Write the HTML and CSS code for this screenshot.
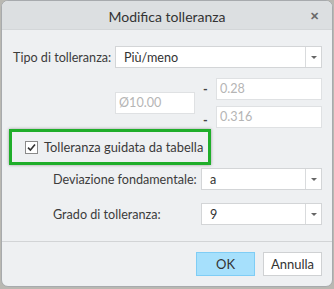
FILE: index.html
```html
<!DOCTYPE html>
<html>
<head>
    <title>Modifica tolleranza</title>
    <link rel="stylesheet" href="styles.css">
</head>
<body>
    <div class="dialog">
        <div class="titlebar">
            <span></span>
            <span class="title">Modifica tolleranza</span>
            <span class="close">&#x2715;</span>
        </div>

        <div class="content">
            <!-- Tipo -->
            <div class="row-type">
                <label>Tipo di tolleranza:</label>
                <div class="select">
                    <span class="value">Più/meno</span>
                    <span class="arrow"></span>
                </div>
            </div>

            <!-- Valori -->
            <div class="values">
                <div class="field nominal">Ø10.00</div>
                <div class="limits">
                    <div class="limit"><span class="minus">-</span><div class="field">0.28</div></div>
                    <div class="limit"><span class="minus">-</span><div class="field">0.316</div></div>
                </div>
            </div>

            <div class="table-box">
                <span class="check">
                    <svg width="9" height="9" viewBox="0 0 9 9"><path d="M1 4.6 L3.4 7 L8 1.6" fill="none" stroke="#333" stroke-width="1.6"/></svg>
                </span>
                <span>Tolleranza guidata da tabella</span>
            </div>

            <div class="row-sub">
                <label>Deviazione fondamentale:</label>
                <div class="select">
                    <span class="value">a</span>
                    <span class="arrow"></span>
                </div>
            </div>

            <div class="row-sub second">
                <label>Grado di tolleranza:</label>
                <div class="select">
                    <span class="value">9</span>
                    <span class="arrow"></span>
                </div>
            </div>
        </div>

        <div class="footer">
            <button class="ok">OK</button>
            <button>Annulla</button>
        </div>
    </div>
</body>
</html>
```

FILE: styles.css
```css
body {
    margin: 0;
    background: #b9b8b2;
    font-family: Lato, "Noto Sans", sans-serif;
    color: #3c3c3c;
}

.dialog {
    width: 330px;
    height: 285px;
    margin-left: 1px;
    border: 1px solid #a7aaad;
    border-radius: 7px;
    background: #eef0f2;
    overflow: hidden;
    display: flex;
    flex-direction: column;
}

.titlebar {
    height: 28px;
    background: #dcdfe1;
    border-bottom: 1px solid #d3d6d8;
    display: grid;
    grid-template-columns: 30px 1fr 30px;
    align-items: center;
    font-size: 14px;
}
.title { text-align: center; color: #333; padding-top: 2px; }
.close { text-align: center; font-size: 11px; font-weight: bold; color: #6a6a6a; padding-right: 6px; padding-top: 2px; }

.content { padding: 16px 10px 0 11px; font-size: 12.6px; flex: 1; }

.row-type { display: grid; grid-template-columns: 102px 1fr; align-items: center; }
label { white-space: nowrap; }

.select {
    height: 20px;
    border: 1px solid #d3d5d7;
    background: #fff;
    display: flex;
    align-items: center;
}
.select .value { flex: 1; padding-left: 8px; color: #333; }
.select .arrow {
    width: 15px;
    height: 100%;
    border-left: 1px solid #d9dbdd;
    display: flex;
    align-items: center;
    justify-content: center;
}
.select .arrow::after {
    content: "";
    border-left: 3px solid transparent;
    border-right: 3px solid transparent;
    border-top: 3px solid #666;
}

.values { display: flex; align-items: center; margin: 10px 0 0 102px; }
.field {
    height: 20px;
    border: 1px solid #dfe1e3;
    background: #fff;
    color: #b5b5b5;
    line-height: 20px;
    padding-left: 3px;
    box-sizing: content-box;
}
.nominal { width: 78px; }
.limits { display: flex; flex-direction: column; gap: 6px; margin-left: 8px; }
.limit { display: flex; align-items: center; }
.limit .field { width: 101px; }
.minus { width: 13px; font-weight: bold; color: #444; padding-top: 6px; }
.limit:first-child .minus { padding-top: 0; }

.table-box {
    margin: 1px 0 0 -4px;
    width: 183px;
    height: 30px;
    border: 3px solid #1fae2a;
    box-shadow: 0 0 3px rgba(0, 0, 0, 0.35);
    display: flex;
    align-items: center;
    gap: 6px;
    padding-left: 13px;
    box-sizing: content-box;
    font-size: 12.9px;
    white-space: nowrap;
    color: #3a3a3a;
}
.table-box .check {
    width: 11px;
    height: 11px;
    border: 1px solid #8a8a8a;
    background: #fff;
    display: flex;
    align-items: center;
    justify-content: center;
}

.row-sub { display: grid; grid-template-columns: 148px 1fr; align-items: center; padding-left: 40px; margin-top: 3px; }
.row-sub.second { margin-top: 13px; }

.footer {
    height: 44px;
    border-top: 1px solid #d2d4d6;
    display: flex;
    justify-content: flex-end;
    align-items: center;
    gap: 8px;
    padding-right: 10px;
}
button {
    width: 59px;
    height: 24px;
    border: 1px solid #cfd1d3;
    background: #fff;
    font-family: inherit;
    font-size: 13px;
    color: #333;
    padding: 0;
}
button.ok { background: #a6e0fc; border-color: #7fcdf5; }
```
